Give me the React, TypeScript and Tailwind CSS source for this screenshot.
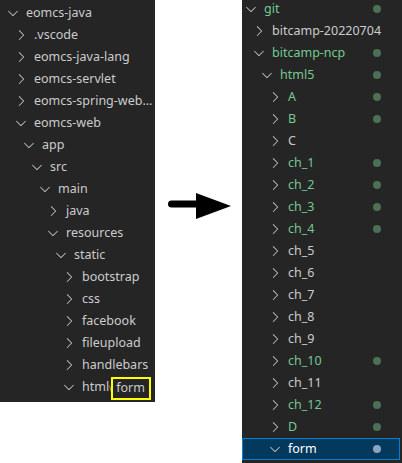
import React from "react";

type Item = {
  label: string;
  depth: number;
  open?: boolean;
  green?: boolean;
  dot?: boolean;
  selected?: boolean;
};

const leftItems: Item[] = [
  { label: "eomcs-java", depth: 0, open: true },
  { label: ".vscode", depth: 1 },
  { label: "eomcs-java-lang", depth: 1 },
  { label: "eomcs-servlet", depth: 1 },
  { label: "eomcs-spring-web...", depth: 1 },
  { label: "eomcs-web", depth: 1, open: true },
  { label: "app", depth: 2, open: true },
  { label: "src", depth: 3, open: true },
  { label: "main", depth: 4, open: true },
  { label: "java", depth: 5 },
  { label: "resources", depth: 5, open: true },
  { label: "static", depth: 6, open: true },
  { label: "bootstrap", depth: 7 },
  { label: "css", depth: 7 },
  { label: "facebook", depth: 7 },
  { label: "fileupload", depth: 7 },
  { label: "handlebars", depth: 7 },
];

const rightItems: Item[] = [
  { label: "git", depth: 0, open: true, green: true, dot: true },
  { label: "bitcamp-20220704", depth: 1 },
  { label: "bitcamp-ncp", depth: 1, open: true, green: true, dot: true },
  { label: "html5", depth: 2, open: true, green: true, dot: true },
  { label: "A", depth: 3, green: true, dot: true },
  { label: "B", depth: 3, green: true, dot: true },
  { label: "C", depth: 3 },
  { label: "ch_1", depth: 3, green: true, dot: true },
  { label: "ch_2", depth: 3, green: true, dot: true },
  { label: "ch_3", depth: 3, green: true, dot: true },
  { label: "ch_4", depth: 3, green: true, dot: true },
  { label: "ch_5", depth: 3 },
  { label: "ch_6", depth: 3 },
  { label: "ch_7", depth: 3 },
  { label: "ch_8", depth: 3 },
  { label: "ch_9", depth: 3 },
  { label: "ch_10", depth: 3, green: true, dot: true },
  { label: "ch_11", depth: 3 },
  { label: "ch_12", depth: 3, green: true, dot: true },
  { label: "D", depth: 3, green: true, dot: true },
  { label: "form", depth: 3, open: true, dot: true, selected: true },
];

function Chevron({ open }: { open?: boolean }) {
  return (
    <span className="flex h-[16px] w-[16px] shrink-0 items-center justify-center text-[#c5c5c5]">
      <svg width="16" height="16" viewBox="0 0 16 16" fill="currentColor">
        {open ? (
          <path d="M7.976 10.072l4.357-4.357.62.618L8.284 11h-.618L3 6.333l.619-.618 4.357 4.357z" />
        ) : (
          <path d="M10.072 8.024L5.715 3.667l.618-.62L11 7.716v.618L6.333 13l-.618-.619 4.357-4.357z" />
        )}
      </svg>
    </span>
  );
}

function Row({ item, base }: { item: Item; base: number }) {
  return (
    <div
      className={
        "flex h-[22px] items-center border " +
        (item.selected ? "border-[#007fd4] bg-[#04395e]" : "border-transparent")
      }
      style={{ paddingLeft: base + item.depth * 8 }}
    >
      <Chevron open={item.open} />
      <span
        className={
          "ml-[5px] whitespace-nowrap " +
          (item.selected ? "text-white" : item.green ? "text-[#73c991]" : "text-[#cccccc]")
        }
      >
        {item.label}
      </span>
      {item.dot && (
        <span
          className={
            "ml-auto mr-[18px] h-[8px] w-[8px] shrink-0 rounded-full " +
            (item.selected ? "bg-[#8aa4bf]" : "bg-[#4b7053]")
          }
        />
      )}
    </div>
  );
}

export default function App() {
  return (
    <div
      className="flex h-[463px] w-[402px] items-start bg-white text-[12.5px]"
      style={{ fontFamily: '"Noto Sans", "Open Sans", sans-serif' }}
    >
      {/* left explorer */}
      <div className="h-[402px] w-[155px] shrink-0 overflow-hidden bg-[#252526] pt-[2px]">
        {leftItems.map((it) => (
          <Row key={it.label} item={it} base={4} />
        ))}
        <div className="flex h-[22px] items-center border border-transparent" style={{ paddingLeft: 4 + 7 * 8 }}>
          <Chevron open />
          <span className="ml-[5px] text-[#cccccc]">html</span>
          <svg width="3" height="8" viewBox="0 0 3 8" className="mt-[4px]">
            <path d="M0.5 0.5 L2.5 7.5" stroke="#8a8a8a" strokeWidth="1" />
          </svg>
          <span className="-ml-[1px] mt-[2px] flex h-[23px] w-[40px] items-center border-2 border-[#ffff00] pl-[3px] text-[#cccccc]">
            form
          </span>
        </div>
      </div>

      {/* arrow */}
      <div className="flex w-[87px] shrink-0 justify-center pt-[192px] pl-[2px]">
        <svg width="64" height="28" viewBox="0 0 64 28">
          <path d="M3.5 12 H30" stroke="#000" strokeWidth="7" strokeLinecap="round" />
          <path d="M28 1 L63 14 L28 27 Z" fill="#000" />
        </svg>
      </div>

      {/* right explorer */}
      <div className="h-[463px] w-[160px] shrink-0 overflow-hidden bg-[#252526] pr-[2px]">
        <div className="-mt-[2px]">
          {rightItems.map((it) => (
            <Row key={it.label} item={it} base={0} />
          ))}
        </div>
      </div>
    </div>
  );
}
